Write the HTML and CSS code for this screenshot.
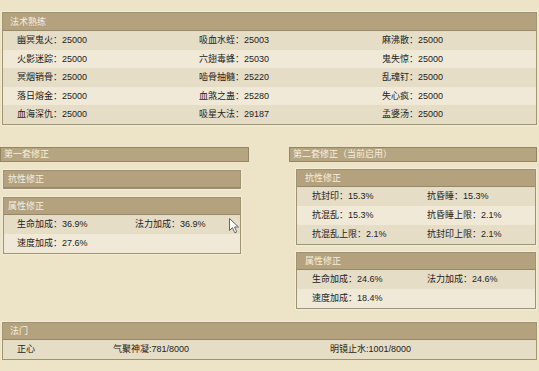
FILE: index.html
```html
<!DOCTYPE html>
<html lang="zh-CN">
<head>
    <meta charset="UTF-8">
    <meta name="viewport" content="width=device-width, initial-scale=1.0">
    <title>修炼属性</title>
    <link rel="stylesheet" href="styles.css">
</head>
<body>
    <div class="page">
        <section class="panel skills">
            <div class="panel-head">法术熟练</div>
            <div class="row"><span>幽冥鬼火：25000</span><span>吸血水蛭：25003</span><span>麻沸散：25000</span></div>
            <div class="row"><span>火影迷踪：25000</span><span>六翅毒蜂：25030</span><span>鬼失惊：25000</span></div>
            <div class="row"><span>冥烟销骨：25000</span><span>啮骨抽髓：25220</span><span>乱魂钉：25000</span></div>
            <div class="row"><span>落日熔金：25000</span><span>血煞之蛊：25280</span><span>失心疯：25000</span></div>
            <div class="row"><span>血海深仇：25000</span><span>吸星大法：29187</span><span>孟婆汤：25000</span></div>
        </section>

        <div class="sets">
            <div class="set set-left">
                <div class="set-bar">第一套修正</div>
                <section class="panel">
                    <div class="panel-head">抗性修正</div>
                </section>
                <section class="panel">
                    <div class="panel-head">属性修正</div>
                    <div class="row"><span>生命加成：36.9%</span><span>法力加成：36.9%</span></div>
                    <div class="row"><span>速度加成：27.6%</span></div>
                </section>
            </div>

            <div class="set set-right">
                <div class="set-bar">第二套修正（当前启用）</div>
                <section class="panel">
                    <div class="panel-head">抗性修正</div>
                    <div class="row"><span>抗封印：15.3%</span><span>抗昏睡：15.3%</span></div>
                    <div class="row"><span>抗混乱：15.3%</span><span>抗昏睡上限：2.1%</span></div>
                    <div class="row"><span>抗混乱上限：2.1%</span><span>抗封印上限：2.1%</span></div>
                </section>
                <section class="panel">
                    <div class="panel-head">属性修正</div>
                    <div class="row"><span>生命加成：24.6%</span><span>法力加成：24.6%</span></div>
                    <div class="row"><span>速度加成：18.4%</span></div>
                </section>
            </div>
        </div>

        <section class="panel famen">
            <div class="panel-head">法门</div>
            <div class="row"><span>正心</span><span>气聚神凝:781/8000</span><span>明镜止水:1001/8000</span></div>
        </section>
    </div>

    <!-- mouse pointer left in the shot -->
    <svg class="cursor" width="11" height="16" viewBox="0 0 11 16">
        <path d="M0.5 0.5 L0.5 12.5 L3.5 9.7 L5.8 14.8 L7.8 13.9 L5.6 9 L9.5 9 Z" fill="#fff" stroke="#666" stroke-width="1"/>
    </svg>
</body>
</html>
```

FILE: styles.css
```css
body {
    margin: 0;
    background-color: #ede4c8;
    font-family: "Liberation Sans", "Noto Sans CJK SC", sans-serif;
    font-size: 9px;
    color: #222;
}
.page {
    padding-top: 12px;
}
.panel {
    border: 1px solid #9f9271;
    box-shadow: 0 0 0 1px #f3ecd8, inset 0 0 0 1px #d8ceb3;
    background-color: #efe8d5;
}
.panel-head {
    height: 17px;
    line-height: 17px;
    padding-left: 7px;
    background-color: #b3a27d;
    border-bottom: 1px solid #978865;
    color: #f5efe0;
    box-sizing: border-box;
}
.row {
    display: grid;
    height: 19px;
    line-height: 19px;
    background-color: #e6ddc7;
}
.row:nth-child(odd) {
    background-color: #f0e9d7;
}

/* 法术熟练 */
.skills {
    margin: 0 2px;
}
.skills .panel-head {
    height: 18px;
    line-height: 18px;
}
.skills .row {
    height: 18.5px;
    line-height: 18.5px;
    padding-left: 14px;
    grid-template-columns: 182px 183px 1fr;
}

/* 两套修正 */
.sets {
    display: flex;
    justify-content: space-between;
    margin-top: 22px;
}
.set-left {
    width: 249px;
}
.set-right {
    width: 248px;
    margin-right: 2px;
}
.set-bar {
    height: 13px;
    line-height: 13px;
    padding-left: 3px;
    background-color: #b5a580;
    border: 1px solid #958663;
    color: #f5efe0;
}
.set-left .panel {
    margin: 8px 8px 0 3px;
}
.set-left .panel-head {
    padding-left: 4px;
}
.set-left .row {
    padding-left: 13px;
    grid-template-columns: 118px 1fr;
}
.set-right .panel {
    margin: 7px 1px 0 7px;
}
.set-right .panel-head {
    padding-left: 8px;
}
.set-right .row {
    padding-left: 15px;
    grid-template-columns: 115px 1fr;
}

/* 法门 */
.famen {
    margin: 13px 2px 0;
}
.famen .row {
    padding-left: 14px;
    grid-template-columns: 96px 217px 1fr;
}

.cursor {
    position: absolute;
    left: 229px;
    top: 218px;
}
```
